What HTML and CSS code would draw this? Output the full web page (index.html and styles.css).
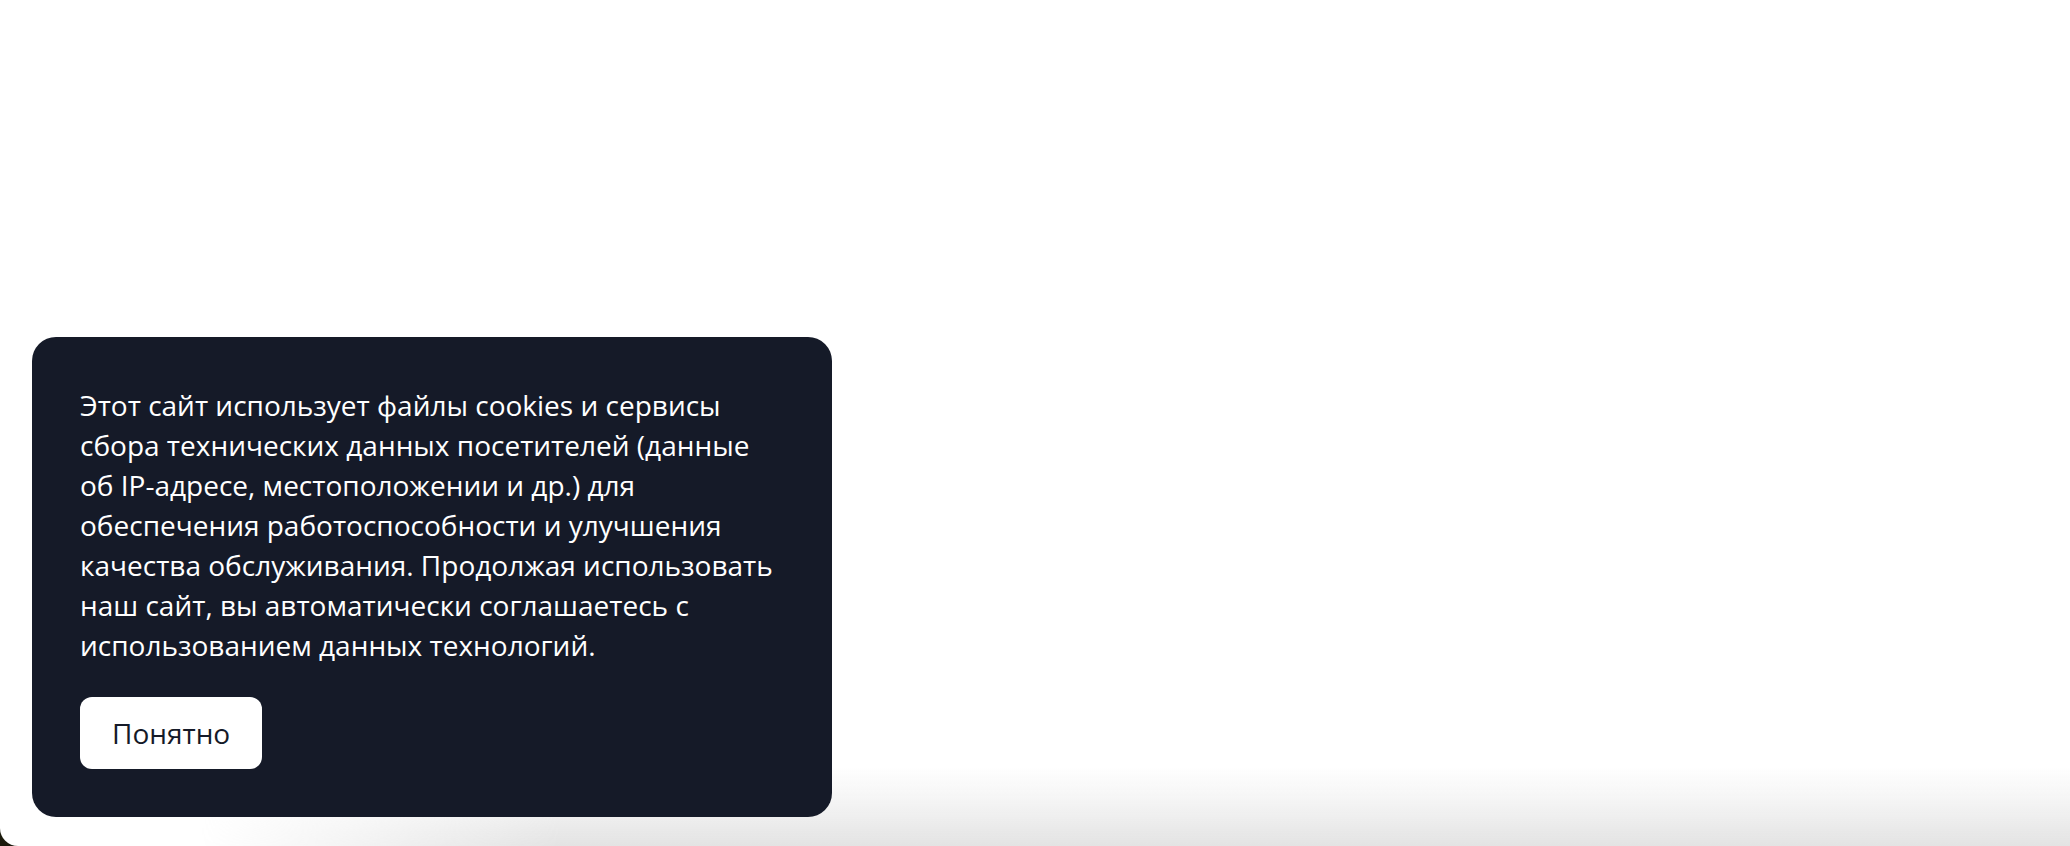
FILE: index.html
```html
<!DOCTYPE html>
<html lang="ru">
<head>
  <meta charset="UTF-8" />
  <meta name="viewport" content="width=device-width, initial-scale=1" />
  <title>Cookies</title>
  <link rel="stylesheet" href="styles.css">
</head>
<body>
  <div class="page">
    <!-- bottom shade of the page -->
    <div class="page-shade"></div>
  </div>

  <div class="cookie-banner">
    <p class="cookie-text">Этот сайт использует файлы cookies и сервисы сбора технических данных посетителей (данные об IP-адресе, местоположении и др.) для обеспечения работоспособности и улучшения качества обслуживания. Продолжая использовать наш сайт, вы автоматически соглашаетесь с использованием данных технологий.</p>
    <button class="cookie-btn" id="acceptBtn">Понятно</button>
  </div>
</body>
</html>
```

FILE: styles.css
```css
/* Basic Reset */
* {
  box-sizing: border-box;
  margin: 0;
  padding: 0;
}
html, body {
  height: 100%;
}
body {
  font-family: "Open Sans", "Noto Sans", Arial, sans-serif;
  background-color: #1b1a0c;
  overflow: hidden;
}
.page {
  position: relative;
  height: 100%;
  background-color: #fff;
  border-bottom-left-radius: 18px;
}
.page-shade {
  position: absolute;
  left: 0;
  right: 0;
  bottom: 0;
  height: 80px;
  background: linear-gradient(to bottom, rgba(228, 228, 228, 0) 0%, rgba(228, 228, 228, 0.4) 45%, #e3e3e3 100%);
  -webkit-mask-image: linear-gradient(to right, transparent 200px, #000 560px);
  mask-image: linear-gradient(to right, transparent 200px, #000 560px);
  border-bottom-left-radius: 18px;
}
.cookie-banner {
  position: fixed;
  left: 32px;
  bottom: 29px;
  width: 800px;
  padding: 48px;
  background-color: #151a28;
  border-radius: 24px;
  color: #fff;
}
.cookie-text {
  font-size: 28px;
  line-height: 40px;
  margin-bottom: 32px;
}
.cookie-btn {
  font-family: inherit;
  font-size: 28px;
  line-height: 40px;
  padding: 16px 32px;
  background-color: #fff;
  color: #151a28;
  border: none;
  border-radius: 12px;
  cursor: pointer;
}
```
